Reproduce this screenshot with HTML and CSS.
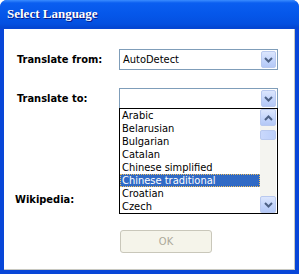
FILE: index.html
```html
<!DOCTYPE html>
<html lang="en">
<head>
  <meta charset="UTF-8" />
  <title>Select Language</title>
  <link rel="stylesheet" href="styles.css">
</head>
<body>
  <div class="window">
    <div class="titlebar">
      <span class="title">Select Language</span>
    </div>

    <div class="client">
      <div class="form">
        <label class="label">Translate from:</label>
        <div class="combo">
          <span class="value">AutoDetect</span>
          <span class="drop-btn">
            <svg width="9" height="6" viewBox="0 0 9 6"><path d="M1 1 L4.5 4.5 L8 1" fill="none" stroke="#4d6185" stroke-width="2"/></svg>
          </span>
        </div>

        <label class="label">Translate to:</label>
        <div class="combo">
          <span class="value"></span>
          <span class="drop-btn">
            <svg width="9" height="6" viewBox="0 0 9 6"><path d="M1 1 L4.5 4.5 L8 1" fill="none" stroke="#4d6185" stroke-width="2"/></svg>
          </span>

          <div class="listbox">
            <ul class="items">
              <li>Arabic</li>
              <li>Belarusian</li>
              <li>Bulgarian</li>
              <li>Catalan</li>
              <li>Chinese simplified</li>
              <li class="selected">Chinese traditional</li>
              <li>Croatian</li>
              <li>Czech</li>
            </ul>
            <div class="scrollbar">
              <span class="sb-btn">
                <svg width="9" height="6" viewBox="0 0 9 6"><path d="M1 5 L4.5 1.5 L8 5" fill="none" stroke="#4d6185" stroke-width="2"/></svg>
              </span>
              <div class="sb-track">
                <span class="sb-thumb"></span>
              </div>
              <span class="sb-btn">
                <svg width="9" height="6" viewBox="0 0 9 6"><path d="M1 1 L4.5 4.5 L8 1" fill="none" stroke="#4d6185" stroke-width="2"/></svg>
              </span>
            </div>
          </div>
        </div>

        <label class="label wiki">Wikipedia:</label>
        <div class="combo wiki-combo"></div>
      </div>

      <div class="actions">
        <button class="ok" disabled>OK</button>
      </div>
    </div>
  </div>
</body>
</html>
```

FILE: styles.css
```css
body {
  margin: 0;
  background: white;
  font-family: "DejaVu Sans Condensed", "DejaVu Sans", sans-serif;
  font-size: 11px;
}

.window {
  width: 299px;
  height: 274px;
  box-sizing: border-box;
  display: flex;
  flex-direction: column;
  background: #0846d8;
  border-radius: 7px 7px 0 0;
  padding: 0 4px 4px 4px;
}

.titlebar {
  height: 29px;
  flex: none;
  display: flex;
  align-items: center;
  padding-left: 3px;
  margin: 0 -4px;
  border-radius: 7px 7px 0 0;
  background: linear-gradient(#3a8cff 0, #0a5ef0 3px, #0557ea 14px, #0450e0 24px, #0446d0 28px, #0846d8 29px);
}

.title {
  color: white;
  font-family: "Liberation Serif", serif;
  font-weight: bold;
  font-size: 13px;
  text-shadow: 1px 1px #0a1883;
  padding-left: 4px;
  padding-bottom: 2px;
}

.client {
  flex: 1;
  background: white;
  border-right: 1px solid #c8c8c0;
  border-bottom: 1px solid #c8c8c0;
  padding: 20px 0 0 13px;
}

.form {
  display: grid;
  grid-template-columns: 102px 159px;
  grid-template-rows: 21px 21px 44px 21px;
  row-gap: 18px;
}

.label {
  font-weight: bold;
  font-size: 11px;
  align-self: center;
  color: black;
}

.wiki {
  grid-row: 4;
  grid-column: 1;
  margin-left: -2px;
}

.combo {
  position: relative;
  box-sizing: border-box;
  height: 21px;
  border: 1px solid #7f9db9;
  background: white;
  display: flex;
  align-items: center;
}

.wiki-combo {
  grid-row: 4;
  grid-column: 2;
}

.value {
  flex: 1;
  padding-left: 3px;
  font-size: 11px;
}

.drop-btn,
.sb-btn {
  width: 15px;
  height: 17px;
  margin-right: 1px;
  box-sizing: border-box;
  border: 1px solid #b9c9ef;
  border-radius: 2px;
  background: linear-gradient(#dce6fd, #c1d3fb 60%, #b4c8f6);
  display: flex;
  align-items: center;
  justify-content: center;
}

.listbox {
  position: absolute;
  left: -1px;
  top: 19px;
  width: 159px;
  height: 106px;
  box-sizing: border-box;
  border: 1px solid black;
  background: white;
  display: flex;
  z-index: 2;
}

.items {
  list-style: none;
  margin: 0;
  padding: 0;
  flex: 1;
  font-size: 11px;
}

.items li {
  height: 13px;
  line-height: 13px;
  padding-left: 2px;
}

.items li.selected {
  background: #316ac5;
  color: white;
  outline: 1px dotted #f0c060;
  outline-offset: -1px;
}

.scrollbar {
  width: 16px;
  display: flex;
  flex-direction: column;
  background: #f4f4f0;
  margin-right: 1px;
}

.sb-btn {
  width: 16px;
  margin: 0;
}

.sb-track {
  flex: 1;
  padding-top: 4px;
}

.sb-thumb {
  display: block;
  height: 10px;
  box-sizing: border-box;
  border: 1px solid #b9c9ef;
  border-radius: 2px;
  background: linear-gradient(90deg, #c9d8fc, #bccffa);
}

.actions {
  padding: 20px 0 0 103px;
}

.ok {
  width: 92px;
  height: 23px;
  border: 1px solid #c9c7ba;
  border-radius: 3px;
  background: #f5f4ea;
  color: #aca899;
  font-family: "DejaVu Sans Condensed", "DejaVu Sans", sans-serif;
  font-size: 11px;
}
```
